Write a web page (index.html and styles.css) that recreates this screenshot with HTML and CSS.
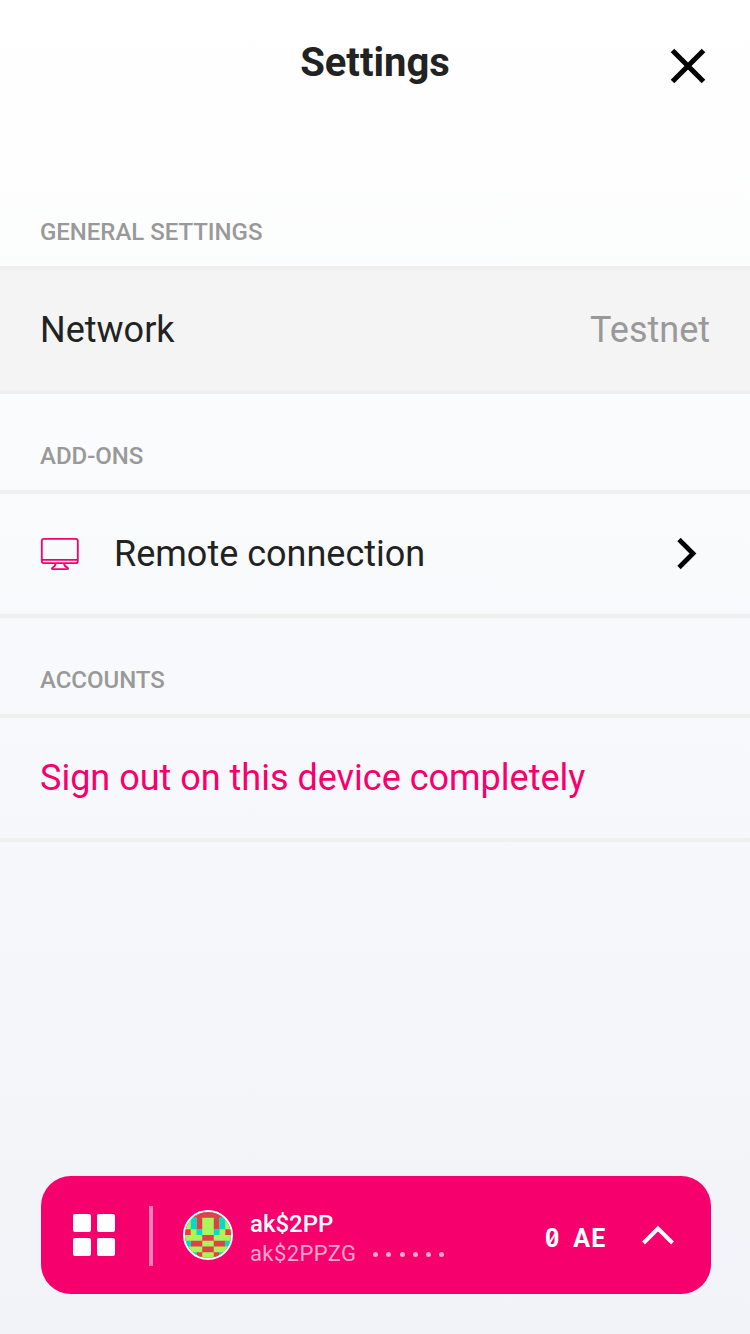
FILE: index.html
```html
<!DOCTYPE html>
<html lang="en">
<head>
<meta charset="utf-8">
<title>Settings</title>
<link rel="stylesheet" href="styles.css">
</head>
<body>
<div class="screen">
  <header class="header">
    <h1 class="title">Settings</h1>
    <svg class="close" viewBox="0 0 36 36"><path d="M2.500 2.500L33.500 33.500M33.500 2.500L2.500 33.500"/></svg>
  </header>
  <main class="content">
    <h2 class="section-title">GENERAL SETTINGS</h2>
    <div class="row row-active"><span class="label">Network</span><span class="value">Testnet</span></div>
    <h2 class="section-title">ADD-ONS</h2>
    <div class="row">
      <svg class="monitor" viewBox="0 0 40 34"><rect x="1.8" y="1.8" width="36" height="24.4" rx="2"/><path d="M2 22.800H38M15.500 26.500Q15.500 29.500 12.500 30.500Q11 32.200 13 32.200H27Q29 32.200 27.500 30.500Q24.500 29.500 24 26.500"/></svg>
      <span class="label">Remote connection</span>
      <svg class="chevron" viewBox="0 0 20 32"><path d="M2 1.500L16 15.500L2 29.500"/></svg>
    </div>
    <h2 class="section-title">ACCOUNTS</h2>
    <div class="row"><span class="label sign-out">Sign out on this device completely</span></div>
  </main>
  <footer class="account-bar">
    <svg class="apps" viewBox="0 0 42 42"><rect width="18" height="18" rx="2"/><rect x="24" width="18" height="18" rx="2"/><rect y="24" width="18" height="18" rx="2"/><rect x="24" y="24" width="18" height="18" rx="2"/></svg>
    <span class="divider"></span>
    <div class="avatar">
      <svg viewBox="0 0 8 8">
        <path fill="#aaf55a" d="M0 0H8V8H0z"/>
        <path fill="#dd4149" d="M0 0H8V1H6V3H5V1H3V3H2V1H0zM0 3H1V4H0zM7 3H8V4H7zM3 4H5V5H3zM1 5H3V6H1zM5 5H7V6H5zM3 6H5V7H3zM2 7H3V8H2zM5 7H6V8H5z"/>
        <path fill="#00dccb" d="M1 1H2V3H1zM6 1H7V3H6zM2 3H3V4H2zM5 3H6V4H5zM0 5H1V6H0zM7 5H8V6H7zM1 7H2V8H1zM6 7H7V8H6z"/>
      </svg>
    </div>
    <div class="account">
      <span class="name">ak$2PP</span>
      <div class="address"><span class="key">ak$2PPZG</span><span class="dots"><i></i><i></i><i></i><i></i><i></i><i></i></span></div>
    </div>
    <div class="balance"><span class="zero">0</span><span class="unit">AE</span></div>
    <svg class="expand" viewBox="0 0 34 20"><path d="M2.500 18L17 3.500L31.500 18"/></svg>
  </footer>
</div>
</body>
</html>
```
FILE: styles.css
```css
* { box-sizing: border-box; }
body { margin: 0; font-family: Roboto, "Liberation Sans", sans-serif; color: #222; }
.screen {
  width: 750px;
  height: 1334px;
  display: flex;
  flex-direction: column;
  background: linear-gradient(#fff 0%, #f9fafc 42%, #f1f3f8 100%);
}
.header {
  display: grid;
  grid-template-columns: 1fr auto 1fr;
  align-items: center;
  height: 132px;
  padding: 0 44px;
}
.title { grid-column: 2; margin: 0; padding-bottom: 6px; font-size: 40px; line-height: 48px; font-weight: 700; }
.close { grid-column: 3; justify-self: end; width: 36px; height: 36px; fill: none; stroke: #000; stroke-width: 5; }
.content { padding-top: 34px; }
.section-title {
  display: flex;
  align-items: center;
  height: 96px;
  margin: 0;
  padding: 28px 40px 0;
  font-size: 24px;
  line-height: 28px;
  font-weight: 500;
  letter-spacing: -.03px;
  color: #999;
}
.section-title:first-child { height: 100px; padding-top: 32px; }
.row {
  display: flex;
  align-items: center;
  height: 128px;
  padding: 0 40px;
  border-top: 4px solid #efeff0;
  border-bottom: 4px solid #efeff0;
}
.row-active { background: #f4f4f4; }
.label, .value { font-size: 36px; line-height: 44px; }
.value { margin-left: auto; color: #999; }
.sign-out { color: #f6006d; }
.monitor { width: 40px; height: 34px; margin-right: 34px; fill: none; stroke: #f6006d; stroke-width: 1.8; }
.chevron { width: 20px; height: 32px; margin-left: auto; margin-right: 13px; fill: none; stroke: #000; stroke-width: 4.8; }
.account-bar {
  display: flex;
  align-items: center;
  width: 670px;
  height: 118px;
  margin: auto 39px 40px 41px;
  padding-left: 32px;
  border-radius: 30px;
  background: #f6006d;
  color: #fff;
}
.apps { width: 42px; height: 42px; fill: #fff; }
.divider { width: 4px; height: 60px; margin: 2px 30px 0 34px; background: #fa80b6; }
.avatar { width: 50px; height: 50px; border: 2px solid #fff; border-radius: 50%; overflow: hidden; }
.avatar svg { display: block; width: 46px; height: 46px; }
.account { display: flex; flex-direction: column; width: 210px; margin-left: 17px; padding-top: 8px; }
.name { font-size: 24px; line-height: 30px; font-weight: 500; }
.address { display: flex; align-items: center; height: 30px; color: #fca6cc; }
.key { width: 106px; font-size: 22px; line-height: 30px; letter-spacing: .4px; }
.dots { display: flex; gap: 8.3px; margin-left: 17px; }
.dots i { width: 5px; height: 5px; border-radius: 50%; background: #fca6cc; }
.balance { display: flex; gap: 14px; margin-left: 85px; padding-top: 7px; font-size: 25px; line-height: 30px; font-weight: 700; }
.zero { position: relative; }
.zero::after {
  content: "";
  position: absolute;
  left: 6px;
  top: 9px;
  width: 2px;
  height: 12px;
  background: #fff;
  transform: rotate(32deg);
}
.unit { letter-spacing: 1px; }
.expand { width: 34px; height: 20px; margin-left: auto; margin-right: 36px; fill: none; stroke: #fff; stroke-width: 4; }
```
